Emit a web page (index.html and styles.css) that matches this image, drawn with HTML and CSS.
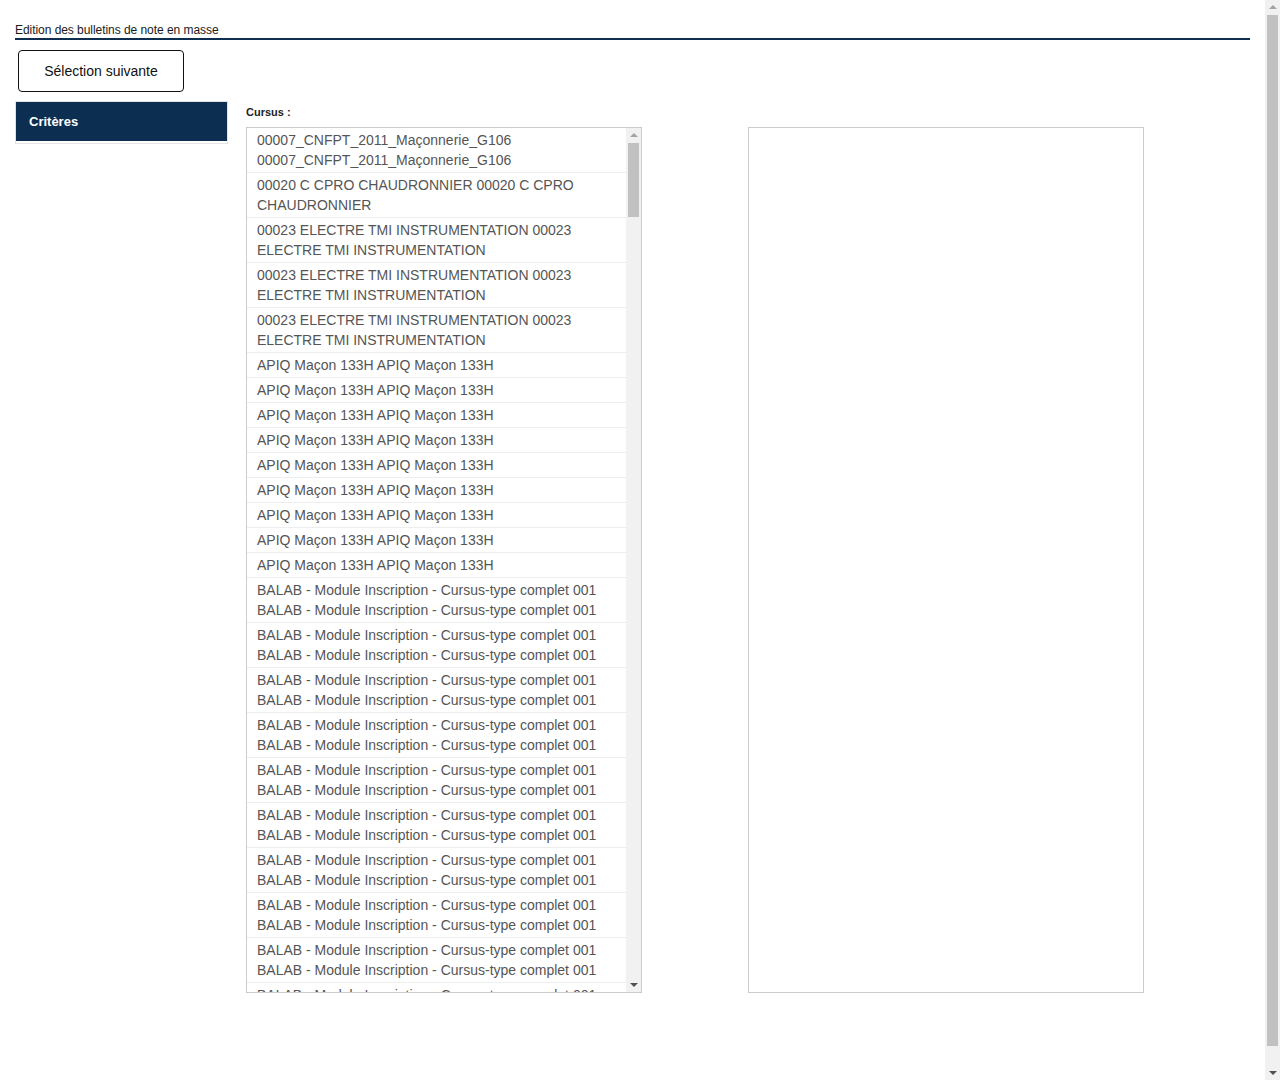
FILE: index.html
```html
<!DOCTYPE html>
<html lang="fr">
<head>
<meta charset="utf-8">
<title>Edition des bulletins de note en masse</title>
<link rel="stylesheet" href="styles.css">
</head>
<body>
<div class="viewport">
  <div class="page">
    <div class="title">Edition des bulletins de note en masse</div>
    <div class="actions">
      <button class="btn" type="button">Sélection suivante</button>
    </div>
    <div class="main">
      <aside class="sidebar">
        <div class="side-panel">
          <div class="side-head">Critères</div>
        </div>
      </aside>
      <section class="content">
        <div class="field-label">Cursus :</div>
        <div class="boxes">
          <div class="list">
            <div class="list-items">
              <div class="item">00007_CNFPT_2011_Maçonnerie_G106 00007_CNFPT_2011_Maçonnerie_G106</div>
              <div class="item">00020 C CPRO CHAUDRONNIER 00020 C CPRO CHAUDRONNIER</div>
              <div class="item">00023 ELECTRE TMI INSTRUMENTATION 00023 ELECTRE TMI INSTRUMENTATION</div>
              <div class="item">00023 ELECTRE TMI INSTRUMENTATION 00023 ELECTRE TMI INSTRUMENTATION</div>
              <div class="item">00023 ELECTRE TMI INSTRUMENTATION 00023 ELECTRE TMI INSTRUMENTATION</div>
              <div class="item">APIQ Maçon 133H APIQ Maçon 133H</div>
              <div class="item">APIQ Maçon 133H APIQ Maçon 133H</div>
              <div class="item">APIQ Maçon 133H APIQ Maçon 133H</div>
              <div class="item">APIQ Maçon 133H APIQ Maçon 133H</div>
              <div class="item">APIQ Maçon 133H APIQ Maçon 133H</div>
              <div class="item">APIQ Maçon 133H APIQ Maçon 133H</div>
              <div class="item">APIQ Maçon 133H APIQ Maçon 133H</div>
              <div class="item">APIQ Maçon 133H APIQ Maçon 133H</div>
              <div class="item">APIQ Maçon 133H APIQ Maçon 133H</div>
              <div class="item">BALAB - Module Inscription - Cursus-type complet 001 BALAB - Module Inscription - Cursus-type complet 001</div>
              <div class="item">BALAB - Module Inscription - Cursus-type complet 001 BALAB - Module Inscription - Cursus-type complet 001</div>
              <div class="item">BALAB - Module Inscription - Cursus-type complet 001 BALAB - Module Inscription - Cursus-type complet 001</div>
              <div class="item">BALAB - Module Inscription - Cursus-type complet 001 BALAB - Module Inscription - Cursus-type complet 001</div>
              <div class="item">BALAB - Module Inscription - Cursus-type complet 001 BALAB - Module Inscription - Cursus-type complet 001</div>
              <div class="item">BALAB - Module Inscription - Cursus-type complet 001 BALAB - Module Inscription - Cursus-type complet 001</div>
              <div class="item">BALAB - Module Inscription - Cursus-type complet 001 BALAB - Module Inscription - Cursus-type complet 001</div>
              <div class="item">BALAB - Module Inscription - Cursus-type complet 001 BALAB - Module Inscription - Cursus-type complet 001</div>
              <div class="item">BALAB - Module Inscription - Cursus-type complet 001 BALAB - Module Inscription - Cursus-type complet 001</div>
              <div class="item">BALAB - Module Inscription - Cursus-type complet 001 BALAB - Module Inscription - Cursus-type complet 001</div>
            </div>
            <div class="scrollbar">
              <div class="sb-btn"><span class="arrow-up light"></span></div>
              <div class="sb-track"><div class="sb-thumb list-thumb"></div></div>
              <div class="sb-btn"><span class="arrow-down"></span></div>
            </div>
          </div>
          <div class="target"></div>
        </div>
      </section>
    </div>
  </div>
  <div class="scrollbar page-scrollbar">
    <div class="sb-btn"><span class="arrow-up light"></span></div>
    <div class="sb-track"><div class="sb-thumb page-thumb"></div></div>
    <div class="sb-btn"><span class="arrow-down"></span></div>
  </div>
</div>
</body>
</html>
```

FILE: styles.css
```css
html, body {
  margin: 0;
  padding: 0;
  background: #fff;
  overflow: hidden;
}

body {
  font-family: "Liberation Sans", Arial, sans-serif;
  color: #222;
}

.viewport {
  display: flex;
  height: 1080px;
}

.page {
  flex: 1;
  min-width: 0;
  padding: 0 15px;
  overflow: hidden;
}

/* drawn scrollbars */
.scrollbar {
  width: 15px;
  flex: none;
  display: flex;
  flex-direction: column;
  background: #f1f1f1;
}

.sb-btn {
  height: 15px;
  flex: none;
  display: flex;
  align-items: center;
  justify-content: center;
}

.sb-track {
  flex: 1;
  display: flex;
  flex-direction: column;
}

.sb-thumb {
  margin: 0 2px;
  background: #c1c1c1;
}

.list-thumb {
  height: 74px;
}

.page-thumb {
  height: 1031px;
}

.arrow-up {
  width: 0;
  height: 0;
  border-left: 4px solid transparent;
  border-right: 4px solid transparent;
  border-bottom: 4px solid #505050;
  margin-top: -1px;
}

.arrow-up.light {
  border-bottom-color: #a3a3a3;
}

.arrow-down {
  width: 0;
  height: 0;
  border-left: 4px solid transparent;
  border-right: 4px solid transparent;
  border-top: 4px solid #505050;
  margin-top: 1px;
}

.title {
  padding-top: 22px;
  font-size: 12px;
  line-height: 16px;
  color: #1a1a1a;
  letter-spacing: -0.05px;
  border-bottom: 2px solid #0d2e4f;
}

.actions {
  padding: 10px 0 9px 3px;
}

.btn {
  display: block;
  width: 166px;
  height: 42px;
  background: #fff;
  border: 1px solid #111;
  border-radius: 4px;
  font-family: "Liberation Sans", Arial, sans-serif;
  font-size: 14px;
  color: #111;
  padding: 0;
  cursor: pointer;
}

.main {
  display: flex;
  gap: 18px;
}

.sidebar {
  width: 213px;
  flex: none;
}

.side-panel {
  border: 1px solid #e3e3e3;
  padding-bottom: 2px;
}

.side-head {
  background: #0c2e50;
  color: #fff;
  font-weight: bold;
  font-size: 13px;
  height: 39px;
  line-height: 40px;
  padding-left: 13px;
}

.content {
  flex: none;
}

.field-label {
  font-size: 11px;
  font-weight: bold;
  color: #222;
  line-height: 14px;
  padding-top: 4px;
  margin-bottom: 8px;
}

.boxes {
  display: flex;
  gap: 106px;
}

.list {
  width: 394px;
  height: 864px;
  border: 1px solid #ccc;
  background: #fff;
  display: flex;
}

.list-items {
  flex: 1;
  min-width: 0;
  overflow: hidden;
}

.item {
  padding: 2px 10px;
  font-size: 14px;
  line-height: 20px;
  color: #555;
  border-bottom: 1px solid #eee;
}

.target {
  width: 394px;
  height: 864px;
  border: 1px solid #ccc;
}
```
